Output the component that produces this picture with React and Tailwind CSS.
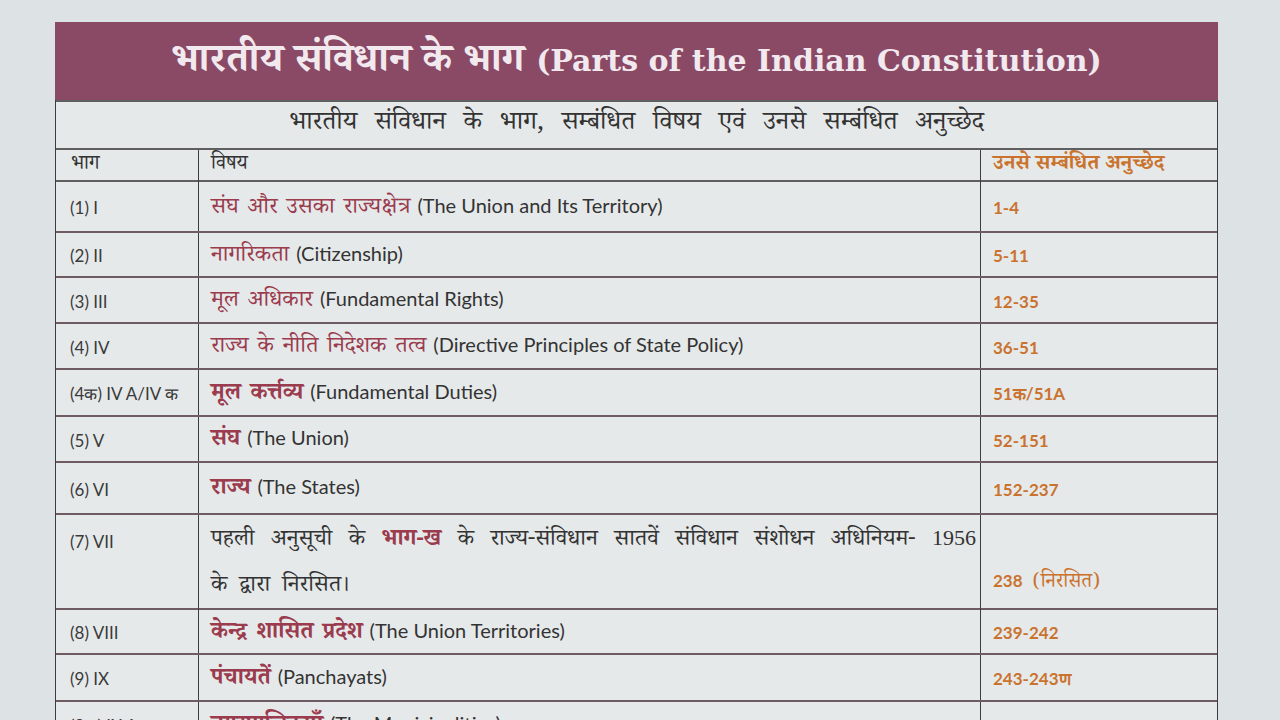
const hindi = "font-['Noto_Serif_Devanagari','Noto_Sans_Devanagari','Lohit_Devanagari','Noto_Sans',serif]";
const latin = "font-['Lato','Open_Sans',sans-serif]";

const rows = [
  { part: "(1) I", hi: "संघ और उसका राज्यक्षेत्र", en: "(The Union and Its Territory)", art: "1-4", h: "h-[51px]", bold: false },
  { part: "(2) II", hi: "नागरिकता", en: "(Citizenship)", art: "5-11", h: "h-[45px]", bold: false },
  { part: "(3) III", hi: "मूल अधिकार", en: "(Fundamental Rights)", art: "12-35", h: "h-[46px]", bold: false },
  { part: "(4) IV", hi: "राज्य के नीति निदेशक तत्व", en: "(Directive Principles of State Policy)", art: "36-51", h: "h-[46px]", bold: false },
  { part: "(4क) IV A/IV क", hi: "मूल कर्त्तव्य", en: "(Fundamental Duties)", art: "51क/51A", h: "h-[47px]", bold: true },
  { part: "(5) V", hi: "संघ", en: "(The Union)", art: "52-151", h: "h-[46px]", bold: true },
  { part: "(6) VI", hi: "राज्य", en: "(The States)", art: "152-237", h: "h-[52px]", bold: true },
];

const rows2 = [
  { part: "(8) VIII", hi: "केन्द्र शासित प्रदेश", en: "(The Union Territories)", art: "239-242", h: "h-[45px]" },
  { part: "(9) IX", hi: "पंचायतें", en: "(Panchayats)", art: "243-243ण", h: "h-[47px]" },
  { part: "(9क) IX A", hi: "नगरपालिकाएँ", en: "(The Municipalities)", art: "243त-243यछ", h: "h-[47px]" },
];

function Row({ r, bold }) {
  return (
    <div className={`grid grid-cols-[143px_782px_238px] border-b-2 border-[#6f5b61] ${r.h}`}>
      <div className={`flex items-center pl-[14px] pt-[3px] border-r border-[#3d3d3d] text-[17px] text-[#3a3a3a] ${latin}`}>
        {r.part}
      </div>
      <div className="flex items-center pl-[12px] pt-[4px] border-r border-[#3d3d3d] text-[#333]">
        <span className="flex items-baseline">
          <span className={`${hindi} text-[23px] text-[#9a3b4e] mr-[7px] [word-spacing:3px] ${bold ? "font-bold" : ""}`}>{r.hi}</span>
          <span className={`${latin} text-[20px]`}>{r.en}</span>
        </span>
      </div>
      <div className={`flex items-center pl-[12px] pt-[3px] text-[17px] font-bold text-[#c9732e] ${latin}`}>
        {r.art}
      </div>
    </div>
  );
}

export default function App() {
  return (
    <div className="w-[1280px] h-[720px] overflow-hidden bg-[#dde2e4] pt-[22px] pl-[55px]">
      <div className="w-[1163px]">
        <div className="h-[78px] pt-[8px] bg-[#8a4a66] flex items-center justify-center text-[#f1e9ee]">
          <span className="flex items-baseline gap-[12px]">
            <span className={`${hindi} text-[40px] font-bold`}>भारतीय संविधान के भाग</span>
            <span className="font-['DejaVu_Serif',serif] text-[30px] font-bold">(Parts of the Indian Constitution)</span>
          </span>
        </div>
        <div className="bg-[#e6e9ea] border-l border-r border-[#3d3d3d]">
          <div className="h-[50px] border-t-2 border-b-2 border-[#5f5f5f] flex items-center justify-center">
            <span className={`${hindi} text-[26px] text-[#333] [word-spacing:11px]`}>
              भारतीय संविधान के भाग, सम्बंधित विषय एवं उनसे सम्बंधित अनुच्छेद
            </span>
          </div>
          <div className="grid grid-cols-[143px_782px_238px] h-[32px] border-b-2 border-[#5f5f5f]">
            <div className={`${hindi} flex items-center pl-[15px] border-r border-[#3d3d3d] text-[20px] text-[#333]`}>भाग</div>
            <div className={`${hindi} flex items-center pl-[12px] border-r border-[#3d3d3d] text-[20px] text-[#333]`}>विषय</div>
            <div className={`${hindi} flex items-center pl-[12px] text-[21px] font-bold text-[#c9732e]`}>उनसे सम्बंधित अनुच्छेद</div>
          </div>
          {rows.map((r) => (
            <Row key={r.part} r={r} bold={r.bold} />
          ))}
          <div className="grid grid-cols-[143px_782px_238px] h-[95px] border-b-2 border-[#6f5b61]">
            <div className={`pt-[14px] pl-[14px] border-r border-[#3d3d3d] text-[17px] text-[#3a3a3a] ${latin}`}>
              (7) VII
            </div>
            <div className={`${hindi} pl-[12px] pr-[4px] border-r border-[#3d3d3d] text-[23px] leading-[46px] text-[#333]`}>
              <p className="text-justify [text-align-last:justify]">
                पहली अनुसूची के <span className="font-bold text-[#9a3b4e]">भाग-ख</span> के राज्य-संविधान सातवें संविधान संशोधन अधिनियम- <span className="font-['Liberation_Serif',serif] text-[22px]">1956</span>
              </p>
              <p className="[word-spacing:6px]">के द्वारा निरसित।</p>
            </div>
            <div className={`flex items-end pb-[12px] pl-[12px] text-[17px] font-bold text-[#c9732e] ${latin}`}>
              <span className="flex items-baseline">
                238 <span className={`${hindi} text-[20px] font-normal ml-[10px]`}>(निरसित)</span>
              </span>
            </div>
          </div>
          {rows2.map((r) => (
            <Row key={r.part} r={r} bold={true} />
          ))}
        </div>
      </div>
    </div>
  );
}
